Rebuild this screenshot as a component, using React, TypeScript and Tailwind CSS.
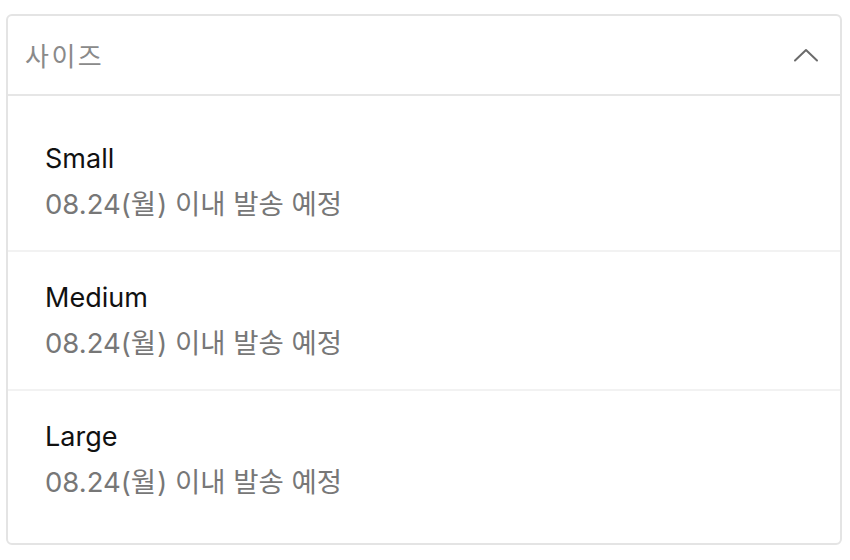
import React from "react";

const items = ["Small", "Medium", "Large"];

export default function App() {
  return (
    <div className="w-[850px] h-[560px] bg-white pt-[14px] pl-[6px]" style={{ fontFamily: 'Inter, "Noto Sans CJK KR", sans-serif' }}>
      <div className="w-[836px] h-[531px] border-2 border-[#e4e4e4] rounded-[6px] flex flex-col overflow-hidden">
        <div className="h-[80px] border-b-2 border-[#e6e6e6] flex items-center justify-between pl-[17px] pr-[21px] shrink-0">
          <span className="text-[26px] text-[#8a8a8a] tracking-[2.5px] mt-[3px]">사이즈</span>
          <svg width="26" height="16" viewBox="0 0 26 16" fill="none">
            <polyline points="2,13.5 13,3 24,13.5" stroke="#6b6b6b" strokeWidth="2" strokeLinecap="round" strokeLinejoin="round" />
          </svg>
        </div>
        <div className="flex flex-col pt-[17px] pb-[16px]">
          {items.map((name, i) => (
            <div key={name} className={`h-[139px] pl-[37px] pt-[28px] ${i < items.length - 1 ? "border-b-2 border-[#f2f2f2]" : ""}`}>
              <div className="text-[27px] leading-[36px] text-[#111111]">{name}</div>
              <div className="text-[27.5px] leading-[36px] mt-[9px] text-[#777777] whitespace-nowrap">
                <span>08.24(</span>
                <span className="tracking-[1px]">월</span>
                <span>)</span>
                <span> 이내 발송 예정</span>
              </div>
            </div>
          ))}
        </div>
      </div>
    </div>
  );
}
